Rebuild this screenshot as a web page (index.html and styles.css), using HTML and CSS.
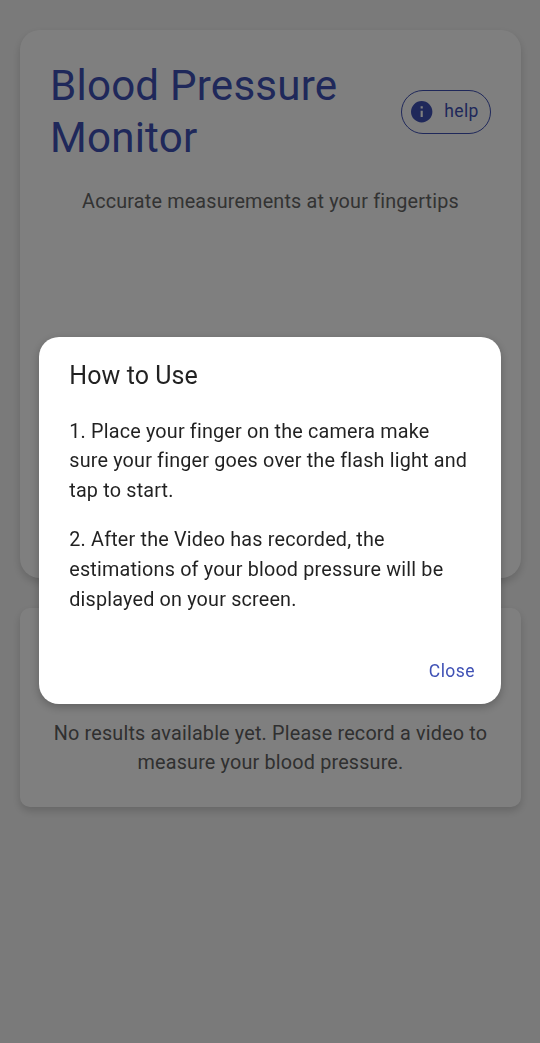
FILE: index.html
```
<!DOCTYPE html>
<html lang="en">
<head>
<meta charset="utf-8">
<title>Blood Pressure Monitor</title>
<link rel="stylesheet" href="styles.css">
</head>
<body>
<main class="page">
  <section class="card monitor">
    <header class="header">
      <h1 class="title">Blood Pressure Monitor</h1>
      <button class="help">
        <svg class="info" viewBox="2 2 20 20"><path fill="currentColor" fill-rule="evenodd" d="M12 2a10 10 0 1 0 0 20 10 10 0 0 0 0-20Zm1 15h-2v-6h2v6Zm0-8h-2V7h2v2Z"/></svg>
        <span class="help-label">help</span>
      </button>
    </header>
    <p class="tagline">Accurate measurements at your fingertips</p>
  </section>
  <section class="card results">
    <p class="empty">No results available yet. Please record a video to measure your blood pressure.</p>
  </section>
</main>
<div class="overlay">
  <div class="dialog" role="dialog" aria-labelledby="dialog-title">
    <h2 class="dialog-title" id="dialog-title">How to Use</h2>
    <p class="step">1. Place your finger on the camera make sure your finger goes over the flash light and tap to start.</p>
    <p class="step">2. After the Video has recorded, the estimations of your blood pressure will be displayed on your screen.</p>
    <div class="actions"><button class="close">Close</button></div>
  </div>
</div>
</body>
</html>
```
FILE: styles.css
```
* { box-sizing: border-box; }
body { margin: 0; background: #f5f5f5; font-family: Roboto, sans-serif; color: rgba(0,0,0,.87); }
h1, h2, p { margin: 0; font-weight: 400; }
button { font: inherit; background: none; border: 0; margin: 0; }
.page { min-height: 1043px; padding: 30px 19px 0 20px; display: flex; flex-direction: column; gap: 30px; }
.card { background: #fff; box-shadow: 0 4px 8px rgba(0,0,0,.17); }
.monitor { height: 548px; border-radius: 20px; padding: 30px; }
.header { display: flex; justify-content: space-between; align-items: center; }
.title { width: 320px; font-size: 42.1px; line-height: 52px; letter-spacing: .22px; color: #3f51b5; }
.help { display: flex; align-items: center; gap: 11.5px; height: 44px; width: 90px; margin-right: -.4px; padding: 0 0 0 9px; border: 1px solid #3f51b5; border-radius: 23px; color: #3f51b5; font-size: 17.5px; letter-spacing: .36px; flex: none; }
.info { width: 21.4px; height: 21.4px; flex: none; }
.help-label { padding-bottom: 2px; }
.tagline { margin-top: 23px; text-align: center; font-size: 19.8px; line-height: 30px; letter-spacing: .18px; color: #666; }
.results { height: 199px; border-radius: 10px; padding: 111px 30px 0; }
.empty { text-align: center; font-size: 19.8px; line-height: 29.3px; letter-spacing: .18px; color: #606060; }
.overlay { position: fixed; inset: 0; background: rgba(0,0,0,.5); padding: 337px 38.6px 0 39.4px; }
.dialog { height: 366.6px; background: #fff; border-radius: 20px; padding: 19px 30px 0 29.9px; box-shadow: 0 3px 10px rgba(0,0,0,.25); }
.dialog-title { font-size: 25px; line-height: 39px; letter-spacing: .08px; }
.step { margin-top: 19.4px; font-size: 19.8px; line-height: 29.8px; letter-spacing: .18px; }
.dialog-title + .step { margin-top: 21.6px; }
.actions { display: flex; justify-content: flex-end; margin-top: 41px; }
.close { padding: 0; margin-right: -3.5px; color: #3f51b5; font-size: 17.5px; line-height: 30px; letter-spacing: .42px; }
```
